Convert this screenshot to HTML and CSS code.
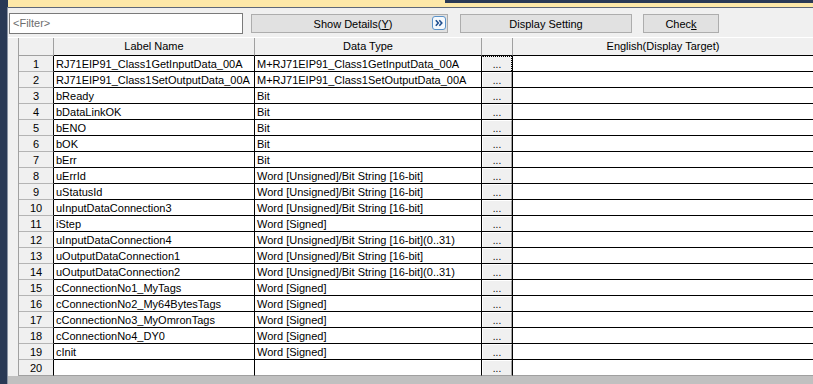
FILE: index.html
```html
<!DOCTYPE html>
<html lang="en">
<head>
  <meta charset="UTF-8" />
  <meta name="viewport" content="width=device-width, initial-scale=1.0"/>
  <title>Label Setting</title>
  <link rel="stylesheet" href="styles.css">
</head>
<body>
  <div class="tabstrip">
    <div class="tab-active"></div>
    <div class="tab-rest"></div>
  </div>

  <div class="panel">
    <div class="toolbar">
      <div class="filter">&lt;Filter&gt;</div>
      <button class="btn btn-details">Show Details(<u>Y</u>)
        <span class="expand">
          <svg width="14" height="14" viewBox="0 0 14 14">
            <rect x="0.5" y="0.5" width="13" height="13" rx="2.5" fill="#f5f9fd" stroke="#5b93c9"/>
            <path d="M3.8 4.3 L6.3 7 L3.8 9.7 M7.3 4.3 L9.8 7 L7.3 9.7" fill="none" stroke="#1f4f8f" stroke-width="1.6"/>
          </svg>
        </span>
      </button>
      <button class="btn btn-display">Display Setting</button>
      <button class="btn btn-check">Chec<u>k</u></button>
    </div>

    <div class="grid">
      <div class="row head">
        <div class="c sel"></div><div class="c num"></div>
        <div class="c name">Label Name</div><div class="c type">Data Type</div>
        <div class="c more"></div><div class="c eng">English(Display Target)</div>
      </div>

      <div class="row"><div class="c sel"></div><div class="c num">1</div><div class="c name">RJ71EIP91_Class1GetInputData_00A</div><div class="c type">M+RJ71EIP91_Class1GetInputData_00A</div><div class="c more"><span class="dots focus">...</span></div><div class="c eng"></div></div>
      <div class="row"><div class="c sel"></div><div class="c num">2</div><div class="c name">RJ71EIP91_Class1SetOutputData_00A</div><div class="c type">M+RJ71EIP91_Class1SetOutputData_00A</div><div class="c more"><span class="dots">...</span></div><div class="c eng"></div></div>
      <div class="row"><div class="c sel"></div><div class="c num">3</div><div class="c name">bReady</div><div class="c type">Bit</div><div class="c more"><span class="dots">...</span></div><div class="c eng"></div></div>
      <div class="row"><div class="c sel"></div><div class="c num">4</div><div class="c name">bDataLinkOK</div><div class="c type">Bit</div><div class="c more"><span class="dots">...</span></div><div class="c eng"></div></div>
      <div class="row"><div class="c sel"></div><div class="c num">5</div><div class="c name">bENO</div><div class="c type">Bit</div><div class="c more"><span class="dots">...</span></div><div class="c eng"></div></div>
      <div class="row"><div class="c sel"></div><div class="c num">6</div><div class="c name">bOK</div><div class="c type">Bit</div><div class="c more"><span class="dots">...</span></div><div class="c eng"></div></div>
      <div class="row"><div class="c sel"></div><div class="c num">7</div><div class="c name">bErr</div><div class="c type">Bit</div><div class="c more"><span class="dots">...</span></div><div class="c eng"></div></div>
      <div class="row"><div class="c sel"></div><div class="c num">8</div><div class="c name">uErrId</div><div class="c type">Word [Unsigned]/Bit String [16-bit]</div><div class="c more"><span class="dots">...</span></div><div class="c eng"></div></div>
      <div class="row"><div class="c sel"></div><div class="c num">9</div><div class="c name">uStatusId</div><div class="c type">Word [Unsigned]/Bit String [16-bit]</div><div class="c more"><span class="dots">...</span></div><div class="c eng"></div></div>
      <div class="row"><div class="c sel"></div><div class="c num">10</div><div class="c name">uInputDataConnection3</div><div class="c type">Word [Unsigned]/Bit String [16-bit]</div><div class="c more"><span class="dots">...</span></div><div class="c eng"></div></div>
      <div class="row"><div class="c sel"></div><div class="c num">11</div><div class="c name">iStep</div><div class="c type">Word [Signed]</div><div class="c more"><span class="dots">...</span></div><div class="c eng"></div></div>
      <div class="row"><div class="c sel"></div><div class="c num">12</div><div class="c name">uInputDataConnection4</div><div class="c type">Word [Unsigned]/Bit String [16-bit](0..31)</div><div class="c more"><span class="dots">...</span></div><div class="c eng"></div></div>
      <div class="row"><div class="c sel"></div><div class="c num">13</div><div class="c name">uOutputDataConnection1</div><div class="c type">Word [Unsigned]/Bit String [16-bit]</div><div class="c more"><span class="dots">...</span></div><div class="c eng"></div></div>
      <div class="row"><div class="c sel"></div><div class="c num">14</div><div class="c name">uOutputDataConnection2</div><div class="c type">Word [Unsigned]/Bit String [16-bit](0..31)</div><div class="c more"><span class="dots">...</span></div><div class="c eng"></div></div>
      <div class="row"><div class="c sel"></div><div class="c num">15</div><div class="c name">cConnectionNo1_MyTags</div><div class="c type">Word [Signed]</div><div class="c more"><span class="dots">...</span></div><div class="c eng"></div></div>
      <div class="row"><div class="c sel"></div><div class="c num">16</div><div class="c name">cConnectionNo2_My64BytesTags</div><div class="c type">Word [Signed]</div><div class="c more"><span class="dots">...</span></div><div class="c eng"></div></div>
      <div class="row"><div class="c sel"></div><div class="c num">17</div><div class="c name">cConnectionNo3_MyOmronTags</div><div class="c type">Word [Signed]</div><div class="c more"><span class="dots">...</span></div><div class="c eng"></div></div>
      <div class="row"><div class="c sel"></div><div class="c num">18</div><div class="c name">cConnectionNo4_DY0</div><div class="c type">Word [Signed]</div><div class="c more"><span class="dots">...</span></div><div class="c eng"></div></div>
      <div class="row"><div class="c sel"></div><div class="c num">19</div><div class="c name">cInit</div><div class="c type">Word [Signed]</div><div class="c more"><span class="dots">...</span></div><div class="c eng"></div></div>
      <div class="row last"><div class="c sel"></div><div class="c num">20</div><div class="c name"></div><div class="c type"></div><div class="c more"><span class="dots">...</span></div><div class="c eng"></div></div>
    </div>

    <div class="footer"></div>
  </div>
</body>
</html>
```

FILE: styles.css
```css
body {
  margin: 0;
  width: 813px;
  height: 384px;
  overflow: hidden;
  background: #293955;
  font-family: 'Liberation Sans', Arial, sans-serif;
  font-size: 11px;
  color: #000;
}

.tabstrip {
  display: flex;
  height: 7px;
  margin-left: 8px;
}

.tab-active {
  width: 437px;
  background: #fde8a8;
}

.tab-rest {
  flex: 1;
  border-bottom: 4px solid #fde8a8;
}

.panel {
  margin-left: 7px;
  border-top: 1px solid #5d6778;
  border-left: 1px solid #8a93a3;
  background: #f0f0f0;
  height: 376px;
  display: flex;
  flex-direction: column;
}

.toolbar {
  display: flex;
  align-items: flex-start;
  height: 29px;
}

.filter {
  box-sizing: border-box;
  width: 234px;
  height: 21px;
  margin: 5px 0 0 1px;
  padding: 3px 3px 0;
  background: #fff;
  border: 1px solid #7a7a7a;
  color: #6d6d6d;
}

.btn {
  position: relative;
  box-sizing: border-box;
  height: 19px;
  margin-top: 6px;
  padding: 0;
  background: #e1e1e1;
  border: 1px solid #adadad;
  font-family: inherit;
  font-size: 11px;
  color: #000;
}

.btn-details {
  width: 197px;
  margin-left: 8px;
  padding-left: 7px;
}

.btn-display {
  width: 172px;
  margin-left: 12px;
}

.btn-check {
  width: 76px;
  margin-left: 11px;
}

.expand {
  position: absolute;
  right: 1px;
  top: 1px;
  width: 14px;
  height: 14px;
}

.expand svg {
  display: block;
}

.grid {
  background: #fff;
}

.row {
  display: grid;
  grid-template-columns: 11px 35px 201px 227px 31px 1fr;
  height: 16px;
}

.c {
  box-sizing: border-box;
  border-right: 1px solid #000;
  border-bottom: 1px solid #000;
  padding: 1px 0 0 2px;
  line-height: 14px;
  white-space: nowrap;
  overflow: hidden;
}

.c.eng {
  border-right: none;
}

.c.sel {
  background: #f0f0f0;
  border-right-color: #a0a0a0;
  border-bottom: none;
}

.c.num {
  background: #f0f0f0;
  border-bottom-color: #b4b4b4;
  text-align: center;
  padding-left: 0;
}

.row.head {
  height: 18px;
  border-top: 1px solid #fff;
}

.row.head .c {
  background: #f0f0f0;
  border-right-color: #a0a0a0;
  text-align: center;
  padding: 1px 0 0;
  line-height: 15px;
}

.row.head .c.num {
  border-bottom-color: #a0a0a0;
}

.row.head .c.eng {
  border-right: none;
}

.row.last .c {
  border-bottom-color: #a0a0a0;
}

.c.more {
  padding: 0;
}

.dots {
  display: block;
  box-sizing: border-box;
  height: 15px;
  background: #f0f0f0;
  border-top: 1px solid #fff;
  border-left: 1px solid #fff;
  border-right: 1px solid #a0a0a0;
  text-align: center;
  line-height: 16px;
  font-size: 10px;
}

.dots.focus {
  border-top: 1px dotted #000;
  border-right: 1px dotted #000;
}

.footer {
  flex: 1;
  background: #c0c0c0;
}
```
